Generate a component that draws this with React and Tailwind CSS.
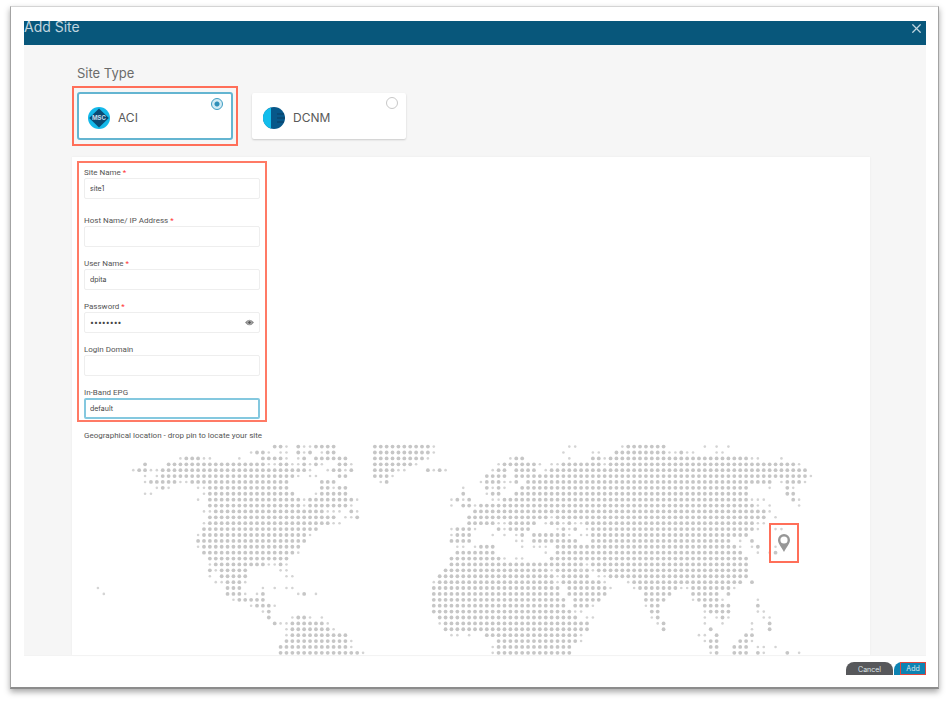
import React, { useState } from "react";
import { X } from "lucide-react";

// Land dots of the world map, one entry per row: [full dots, partial dots]
const MAP_ROWS = [
  ["31-32 35 38-41 48-57 91-97", "33 36 37 58 81 82 90 104 106 108"],
  ["28 29 35 37 40 41 48-57 89-97 100", "27 30 32 33 36 39 58 80 85 86 98 99 101 102 106 107"],
  ["16-18 29-32 36 38-43 48-56 72 73 85 86 88-111", "15 19 20 25 33 35 57 71 81 87 112 113 117"],
  ["9 13-29 32 33 36 38 42 43 48-54 70-75 80-86 88-119", "30 31 34 35 37 39 44 55 69 76 78 79 87 120"],
  ["8 9 12-36 41 42 44 48-51 57 59 69 70 72-75 78-121", "7 10 11 37 40 43 52 53 58 60 68 77"],
  ["12-34 42 43 48-50 67-70 72-121", "9 11 35 37 38 51 122"],
  ["10-14 17-33 39-41 50 67-69 72 74-115 118-120", "9 15 16 49 66 70 71 117 121"],
  ["12 20-33 39 40 42 43 67 69 73-111 118", "11 13 18 19 41 63 68 70 115 119"],
  ["20-34 39-43 63 68 69 72-111 118 119", "9 10 19 38 67"],
  ["20-35 37-44 62 64 70-111 119", "18 36 45 61 63 68 69 112 113 114 120"],
  ["20-35 37-43 63 64 66-112", "36 44 61 65 113 115 120"],
  ["21-39 44 65-114", "19 20 40 41 42 45 115"],
  ["20-41 45 64-77 79-114", "43 44 78 116"],
  ["20-40 64-68 71-75 78 79 81 84-112", "19 41 42 69 70 77 80 82 83 113 114"],
  ["19-38 62-64 69 71-74 80 82 85-112", "61 65 70 79 81 84 113 116 117"],
  ["19-36 62-64 73 75-80 85-111", "18 37 61 68 70 72 81 83 84"],
  ["18-36 61-64 75-82 85-108 112", "72 73 110"],
  ["19-35 66-68 79-109 113", "18 62 63 65 73 75 76 77 110 112 116"],
  ["19-34 62-68 79-110 116", "35 77 113 115"],
  ["20-33 61-69 78-111", "70 72 73"],
  ["21-29 32 61-83 85-111", "20 30 31 33 84"],
  ["20 22-26 60-77 79-84 86-111", "21 32 33 78 83 85"],
  ["22-26 59-78 80-84 88-111", "20 33 34 79 86 87"],
  ["23-25 59-78 80-86 92-110 112", "21 22 26 58 79 87 91"],
  ["23-25 58-79 81-87 93-99 102-108", "1 29 31 33 34 88 92 100 101 109"],
  ["23-25 29 36 58-79 81-87 94-98 102-106 108", "2 26 28 35 38"],
  ["25-29 58-80 82-86 94-97 103-106", "24 102 107 113"],
  ["28-30 58-80 82-84 95 96 104-108 113", "27 31 85 94"],
  ["30 58-81 95 96 105-108", "29 82 83 104 113 114"],
  ["30 35 36 59-82 96 107", "34 37 39 84 85 95 104 106 108 114 115"],
  ["31 34-39 60-84 97 115", "32 33 40 59 96 104 107 112"],
  ["34-40 60-84 97 105 115", "33 41 112"],
  ["34-43 67-82 106 111 112", "33 61 62 64 83 103 104"],
  ["33-43 69-82 105 106 110 111", "44 83 104 112"],
  ["32-43 69-81 105 106 109-111", "44 68 113 114 116"],
  ["32-45 69-81 106 109-111 113 118", "46 68 105 114 120"],
];

const PITCH = 5.885;

function expand(list) {
  return list.split(" ").flatMap((part) => {
    const [from, to = from] = part.split("-").map(Number);
    return Array.from({ length: to - from + 1 }, (_, i) => from + i);
  });
}

function WorldMap() {
  return (
    <svg viewBox="0 0 797 212" className="block w-full" aria-hidden="true">
      {MAP_ROWS.map(([full, partial], row) => {
        const y = 3.6 + row * PITCH;
        return (
          <g key={row}>
            {expand(full).map((col) => (
              <circle key={col} cx={20 + col * PITCH} cy={y} r="1.9" fill="#c6c6c6" />
            ))}
            {expand(partial).map((col) => (
              <circle key={col} cx={20 + col * PITCH} cy={y} r="1.3" fill="#d4d4d4" />
            ))}
          </g>
        );
      })}
    </svg>
  );
}

function AciLogo() {
  return (
    <svg viewBox="0 0 22 22" className="size-[22px]" aria-hidden="true">
      <circle cx="11" cy="11" r="11" fill="#14b9ea" />
      <path d="M11 1.5 20.8 11 11 20.5 1.2 11Z" fill="#0b4a73" />
      <text
        x="11"
        y="13.2"
        textAnchor="middle"
        fontSize="6"
        fontWeight="700"
        fontFamily="Inter, sans-serif"
        fill="#c5dcea"
      >
        MSC
      </text>
    </svg>
  );
}

function DcnmLogo() {
  return (
    <svg viewBox="0 0 22 22" className="size-[22px]" aria-hidden="true">
      <circle cx="11" cy="11" r="11" fill="#07588a" />
      <path d="M8 .4A11 11 0 0 0 8 21.6Z" fill="#12bdec" />
      <path d="M14 7h7M14 11h8M14 15h7" stroke="#0a3c62" strokeWidth="1" />
    </svg>
  );
}

function SiteCard({ name, logo, checked, onChange }) {
  return (
    <label
      className={`relative flex items-center gap-2 bg-white pt-1 text-xs text-[#5a5a5a] ${
        checked
          ? "h-12 w-[156px] rounded-[3px] border-2 border-[#64b5d1] pl-[9px]"
          : "h-[46px] w-[154px] rounded-xs pl-[11px] shadow-[0_1px_2px_rgba(0,0,0,0.18)]"
      }`}
    >
      {logo}
      {name}
      <input
        type="radio"
        name="siteType"
        checked={checked}
        onChange={onChange}
        className="absolute right-2 top-1 m-0 size-3 appearance-none rounded-full border border-[#c8c8c8] bg-white checked:border-[#3d9dc3] checked:bg-[radial-gradient(circle,#2f8fb8_0_2px,#d3ebf4_3px)]"
      />
    </label>
  );
}

function Field({ id, label, required, type = "text", value, focused, children }) {
  return (
    <div>
      <label
        htmlFor={id}
        className="block font-['Roboto',sans-serif] text-[8px] leading-[11px] text-[#555]"
      >
        {label}
        {required && <span className="text-[#f33]"> *</span>}
      </label>
      <div className="relative">
        <input
          id={id}
          type={type}
          defaultValue={value}
          className={`block h-[21px] w-full rounded-xs bg-white text-[7px] text-[#444] outline-none ${
            focused ? "border-2 border-[#84c8df] px-1" : "border border-[#eeeeee] px-[5px]"
          }`}
        />
        {children}
      </div>
    </div>
  );
}

export default function App() {
  const [siteType, setSiteType] = useState("ACI");

  return (
    <div className="bg-white pb-3 pl-[10px] pr-[9px] pt-[6px] font-['Inter',sans-serif]">
      <div className="border border-b-2 border-[#a3a3a3] border-b-[#8c8c8c] border-t-[#d4d4d4] pb-3 pl-[13px] pr-3 pt-[14px] shadow-[0_3px_6px_rgba(0,0,0,0.35)]">
        <header className="flex h-6 items-start justify-between bg-[#08577b] text-[#c0d5df]">
          <h1 className="text-sm leading-3">Add Site</h1>
          <button type="button" aria-label="Close" className="mr-[2px]">
            <X className="size-[15px]" strokeWidth={2} />
          </button>
        </header>

        <main className="bg-[#f6f6f6] pl-12 pr-14 pt-5">
          <h2 className="ml-[5px] text-[13px] leading-4 text-[#6b6b6b]">Site Type</h2>

          {/* Site type */}
          <div className="mt-[5px] flex items-center gap-[14px]">
            <div className="border-2 border-[#ff6f59] px-[3px] py-1">
              <SiteCard
                name="ACI"
                logo={<AciLogo />}
                checked={siteType === "ACI"}
                onChange={() => setSiteType("ACI")}
              />
            </div>
            <SiteCard
              name="DCNM"
              logo={<DcnmLogo />}
              checked={siteType === "DCNM"}
              onChange={() => setSiteType("DCNM")}
            />
          </div>

          <div className="mt-[11px] bg-white pt-1 shadow-[0_0_2px_rgba(0,0,0,0.06)]">
            {/* Connection details */}
            <form className="ml-[5px] flex w-[190px] flex-col gap-[11px] border-2 border-[#ff7a65] px-[5px] pb-px pt-1">
              <div className="mb-[5px]">
                <Field id="siteName" label="Site Name" required value="site1" />
              </div>
              <Field id="host" label="Host Name/ IP Address" required />
              <Field id="userName" label="User Name" required value="dpita" />
              <Field id="password" label="Password" required type="password" value="password">
                <button
                  type="button"
                  aria-label="Show password"
                  className="absolute right-[6px] top-[6px]"
                >
                  <svg viewBox="0 0 9 9" className="size-[9px]">
                    <path d="M0 4.5Q4.5-1 9 4.5Q4.5 10 0 4.5Z" fill="#8a8a8a" />
                    <circle cx="4.5" cy="4.5" r="1.8" fill="#555" stroke="#ddd" strokeWidth=".6" />
                  </svg>
                </button>
              </Field>
              <Field id="domain" label="Login Domain" />
              <Field id="epg" label="In-Band EPG" value="default" focused />
            </form>

            {/* Location */}
            <p className="ml-3 mt-2 font-['Roboto',sans-serif] text-[8px] leading-[11px] text-[#555]">
              Geographical location - drop pin to locate your site
            </p>
            <div className="relative mt-[2px]">
              <WorldMap />
              <button
                type="button"
                aria-label="Site location"
                className="absolute left-[87.4%] top-[37.5%] flex h-10 w-[30px] items-center justify-center border-2 border-[#ff6f59]"
              >
                <svg viewBox="0 0 12 18" className="h-[18px] w-3">
                  <path
                    d="M6 0a6 6 0 0 0-6 6c0 3.5 3.5 7 6 12 2.500-5 6-8.500 6-12a6 6 0 0 0-6-6Z"
                    fill="#979797"
                  />
                  <circle cx="6" cy="6" r="3.6" fill="#fff" />
                </svg>
              </button>
            </div>
          </div>
        </main>

        <footer className="flex h-5 items-start justify-end gap-px overflow-hidden border-t border-[#f3f3f3] pt-[6px] text-[7px] text-[#dfe6ea]">
          <button type="button" className="h-4 w-[47px] rounded-t-lg bg-[#57585b]">
            Cancel
          </button>
          <button type="button" className="flex h-4 w-8 justify-end rounded-tl-lg bg-[#0d83b3]">
            <span className="flex h-[13px] w-[26px] items-center justify-center border border-[#e0463f] pt-px">
              Add
            </span>
          </button>
        </footer>
      </div>
    </div>
  );
}
